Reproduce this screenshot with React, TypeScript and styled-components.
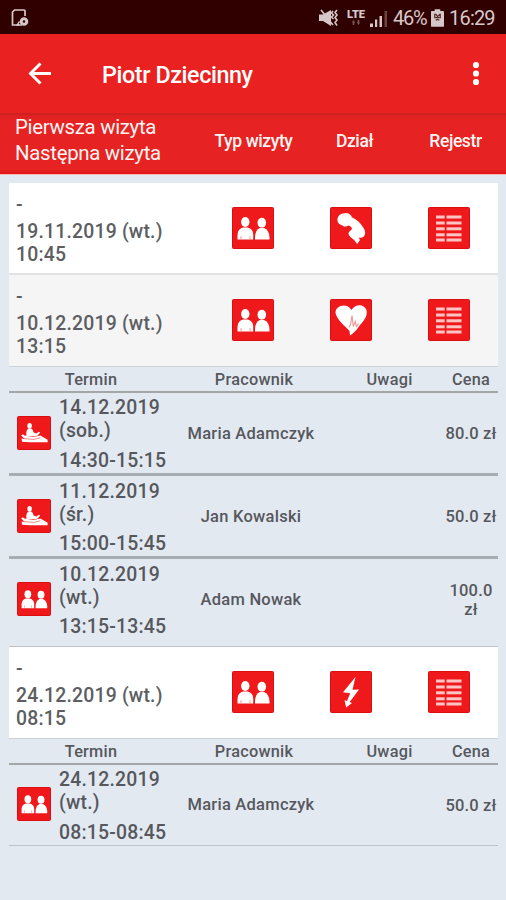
import React from "react";
import styled, { createGlobalStyle } from "styled-components";

const GlobalStyle = createGlobalStyle`
  * { box-sizing: border-box; }
  body { margin: 0; background: #e3e9f1; font-family: Roboto, "Noto Sans", sans-serif; }
`;

const Screen = styled.main`
  width: 506px;
  height: 900px;
  overflow: hidden;
  display: flex;
  flex-direction: column;
  background: #e3e9f1;
  color: #5c5e62;
  font-weight: 500;
`;

const StatusBar = styled.div`
  height: 34px;
  flex: none;
  display: flex;
  align-items: center;
  justify-content: space-between;
  padding: 2px 11px 0 10px;
  background: #300001;
  color: #d6c8c8;
`;

const StatusGroup = styled.div`
  display: flex;
  align-items: center;
`;

const StatusText = styled.span<{ $width: number; $spacing: number }>`
  width: ${(p) => p.$width}px;
  font-size: 20px;
  font-weight: 400;
  line-height: 22px;
  letter-spacing: ${(p) => p.$spacing}px;
  padding-left: 5px;
  white-space: nowrap;
`;

const Network = styled.span`
  display: flex;
  flex-direction: column;
  align-items: center;
  width: 20px;
  margin: 0 4px 1px 7px;
  font-size: 11px;
  font-weight: 900;
  line-height: 10px;
`;

const AppBar = styled.header`
  height: 79px;
  flex: none;
  display: flex;
  align-items: center;
  padding: 1px 20px 0 22px;
  background: #e92121;
  color: #fff;
`;

const Title = styled.h1`
  flex: 1;
  margin: 1px 0 0 44px;
  font-size: 23.3px;
  line-height: 28px;
  font-weight: 500;
  letter-spacing: -0.4px;
`;

const IconButton = styled.button`
  display: flex;
  padding: 0;
  border: 0;
  background: none;
  color: inherit;
`;

const ColumnBar = styled.div`
  height: 62px;
  flex: none;
  display: grid;
  grid-template-columns: 188px 101px 101px 101px;
  padding: 0 0 7px 15px;
  align-items: center;
  background: linear-gradient(#c81f1f 0, #df2222 3px, #e62222 8px, #e62222 57px, #e01515 61px);
  color: #fff4f2;
  border-bottom: 1px solid #f9b8b8;
`;

const ColumnTitle = styled.div`
  padding-top: 1px;
  font-size: 17.5px;
  letter-spacing: -0.4px;
  line-height: 22px;
  text-align: center;
  white-space: nowrap;
`;

const VisitTitle = styled.div`
  font-size: 20.4px;
  line-height: 26.5px;
  font-weight: 400;
  letter-spacing: -0.3px;
  padding-top: 0;
`;

const List = styled.section`
  margin: 8px 8px 0 9px;
`;

const Visit = styled.article<{ $tint?: boolean; $line: number }>`
  height: 92px;
  padding-bottom: ${(p) => 2 - p.$line}px;
  display: grid;
  grid-template-columns: 195px 98px 98px 98px;
  align-items: center;
  justify-items: center;
  background: ${(p) => (p.$tint ? "#f5f5f5" : "#fff")};
  border-bottom: ${(p) => p.$line}px solid ${(p) => (p.$line > 1 ? "#e1e2e3" : "#cdd2d6")};
`;

const DateText = styled.div`
  justify-self: start;
  padding: 3px 0 0 7px;
  font-size: 19.4px;
  line-height: 23px;
  letter-spacing: 0.2px;
  white-space: pre-line;
`;

const FirstVisit = styled.div`
  margin-bottom: 4px;
`;

const Tile = styled.div<{ $size: number }>`
  width: ${(p) => p.$size}px;
  height: ${(p) => p.$size}px;
  flex: none;
  border: 1.5px solid #dc0d10;
  border-radius: 1.5px;
  background: #ef191c;
  svg { display: block; width: 100%; height: 100%; }
`;

const Sessions = styled.div`
  color: #56585d;
`;

const SessionGrid = styled.div`
  display: grid;
  grid-template-columns: 164px 162px 109px 54px;
  align-items: center;
`;

const SessionHead = styled(SessionGrid)`
  height: 26px;
  border-bottom: 2px solid #a3a7aa;
  font-size: 16.3px;
  line-height: 20px;
  letter-spacing: 0.25px;
  text-align: center;
  padding-top: 2px;
`;

const SessionRow = styled(SessionGrid)<{ $last?: boolean; $height: number; $bottom: number }>`
  height: ${(p) => p.$height}px;
  padding-bottom: ${(p) => p.$bottom}px;
  border-bottom: ${(p) => (p.$last ? "1px solid #bfc3c7" : "3px solid #a8adb1")};
`;

const TermCell = styled.div`
  display: flex;
  align-items: center;
  gap: 8px;
  padding-left: 8px;
`;

const Term = styled.div`
  padding-top: 3px;
  font-size: 19.4px;
  line-height: 23px;
  letter-spacing: 0.2px;
  white-space: pre-line;
`;

const Hours = styled.div`
  margin-top: 6.5px;
  white-space: nowrap;
`;

const Worker = styled.div`
  padding: 1px 6px 0 0;
  text-align: center;
  font-size: 16.5px;
  letter-spacing: 0.25px;
`;

const Price = styled.div`
  padding-top: 2px;
  font-size: 16.5px;
  line-height: 19.5px;
  letter-spacing: 0.15px;
  text-align: center;
`;

type IconName = "people" | "baby" | "heart" | "bolt" | "list" | "massage";

const drawings: Record<IconName, React.ReactNode> = {
  people: (
    <g>
      <ellipse cx="12.3" cy="14" rx="4.2" ry="5" />
      <path d="M4.5 31.5V27Q4.5 21 10 19.500h4.800Q20 21 20.200 26v5.500z" />
      <ellipse cx="28.800" cy="14.800" rx="4.300" ry="5" />
      <path d="M22 31.500V29Q22.300 22 27 20h4Q36 22 36.500 29v2.500z" />
      <path d="M8 28v3M17 28v3" stroke="#f79b9c" strokeWidth="1" />
    </g>
  ),
  baby: (
    <path d="M6.500 13C6 8 9.500 5 14 5.200c3-.5 6 1.300 7 4.300 3.500 1.200 9 5.500 11.500 10.500 2 3 2.200 6 .7 8-1 1.500-3 2-5.500 1.700l1.300 2.300-2.800 4-3-4-3.200-2.500c-2-2-3.500-4-1.500-6l2.500-2.500c0-2-1.800-3-3.500-3.500-2.500 1.500-5 1-6.500-.3-2.700-.7-4.200-2.200-4.500-4.200z" />
  ),
  heart: (
    <g>
      <path d="M20.500 10C24 3.500 33 3.500 35.500 10c1.500 7-4 12-8 17-2.500 4-5 6-8.500 8.500l-.5-4.500C14 26 6 20 4.500 13 4.500 5 16 2.500 20.500 10z" />
      <path d="M18 27.500l1.500-3 1.500-9 1.300 11 1.900-5 1.300 5 2-3" fill="none" stroke="#f39495" strokeWidth="1.100" />
    </g>
  ),
  bolt: (
    <path d="M24.500 5L12 20.300l7.200 1-3.200 7.700-2.500-.8 1.700 7.300 5.800-4.500-2.300-.9L28 17.500l-6.500.3z" />
  ),
  list: (
    <g fill="#ffc5c5">
      {[8, 14, 19.800, 25.800, 31].map((y) => (
        <React.Fragment key={y}>
          <rect x="7" y={y - 0.500} width="8.700" height="3" />
          <rect x="17.500" y={y - 0.500} width="15" height="3" />
        </React.Fragment>
      ))}
    </g>
  ),
  massage: (
    <g>
      <ellipse cx="14.500" cy="11" rx="2.800" ry="3.600" />
      <path d="M10.500 24q-1-8 3-9.500h3q2.500 1 3 5l3.500 1 3-2 1.700 1-3 3.500-4 1z" />
      <path d="M4 23q2-2 4 0l11 2 9-2 9 5.500v3q-18 .5-32-.5l-.5-4 4 .5z" />
      <path d="M7 27l13 1 8-2" fill="none" stroke="#ef4547" strokeWidth=".8" />
    </g>
  ),
};

function Icon({ name, size = 42 }: { name: IconName; size?: number }) {
  return (
    <Tile $size={size}>
      <svg viewBox="0 0 40 40" fill="#fff">{drawings[name]}</svg>
    </Tile>
  );
}

interface SessionData {
  icon: IconName;
  date: string;
  hours: string;
  worker: string;
  price: string;
  height: number;
  bottom?: number;
}

interface VisitData {
  first: string;
  next: string;
  department: IconName;
  tint?: boolean;
  line: number;
  sessions: SessionData[];
}

const visits: VisitData[] = [
  { first: "-", next: "19.11.2019 (wt.)\n10:45", department: "baby", line: 2, sessions: [] },
  {
    first: "-",
    next: "10.12.2019 (wt.)\n13:15",
    department: "heart",
    tint: true,
    line: 1,
    sessions: [
      { icon: "massage", date: "14.12.2019\n(sob.)", hours: "14:30-15:15", worker: "Maria Adamczyk", price: "80.0 zł", height: 83, bottom: 1 },
      { icon: "massage", date: "11.12.2019\n(śr.)", hours: "15:00-15:45", worker: "Jan Kowalski", price: "50.0 zł", height: 83 },
      { icon: "people", date: "10.12.2019\n(wt.)", hours: "13:15-13:45", worker: "Adam Nowak", price: "100.0 zł", height: 88, bottom: 7 },
    ],
  },
  {
    first: "-",
    next: "24.12.2019 (wt.)\n08:15",
    department: "bolt",
    line: 1,
    sessions: [
      { icon: "people", date: "24.12.2019\n(wt.)", hours: "08:15-08:45", worker: "Maria Adamczyk", price: "50.0 zł", height: 81, bottom: 2 },
    ],
  },
];

export default function App() {
  return (
    <Screen>
      <GlobalStyle />
      <StatusBar>
        <svg width="19" height="20" viewBox="0 0 19 20" fill="none" stroke="currentColor" strokeWidth="1.700">
          <path d="M15 8V3q0-1-1-1H4.500L2.500 4v13h7" />
          <circle cx="14" cy="13.500" r="2.800" strokeWidth="3" />
          <path d="M9.500 13.500L7 17h5" strokeWidth="1.300" />
        </svg>
        <StatusGroup>
          <svg width="20" height="18" viewBox="0 0 20 18" fill="currentColor">
            <path d="M0 5.500h4L12 1v16L4 12H0z" />
            <path d="M2 1l12 15M14 2l-1.500 2 2 2-2 2 2 2M18 1l-2 2.500 2 2.500-2 2.500 2 2.500-2 2.500 2 3" fill="none" stroke="currentColor" strokeWidth="1.600" />
          </svg>
          <Network>
            LTE
            <svg width="10" height="5" viewBox="0 0 10 6" fill="#7c5556">
              <path d="M0 3l2-3 2 3H3v3H1V3zM6 3h1V0h2v3h1L8 6z" />
            </svg>
          </Network>
          <svg width="18" height="17" viewBox="0 0 18 17" fill="currentColor">
            <path d="M0 13.500h3V17H0zM5 9.500h2.200V17H5zM9.500 6H12v11H9.500z" />
            <path d="M14.500 1H17v16h-2.500z" fill="#694344" />
          </svg>
          <StatusText $width={43} $spacing={-1.2}>46%</StatusText>
          <svg width="13" height="18" viewBox="0 0 14 19" fill="currentColor">
            <path d="M4 0h6v2h3q1 0 1 1v15q0 1-1 1H1q-1 0-1-1V3q0-1 1-1h3z" />
            <path d="M4 5v4h6V5M5 5l2 3 3-3M5 12l2-1 2 1" fill="none" stroke="#5a2c2d" strokeWidth="1.300" />
          </svg>
          <StatusText $width={51} $spacing={-0.8}>16:29</StatusText>
        </StatusGroup>
      </StatusBar>

      <AppBar>
        <IconButton aria-label="Wstecz">
          <svg width="36" height="36" viewBox="0 0 36 36" fill="none" stroke="currentColor" strokeWidth="2.900">
            <path d="M29 17.500H8.500M18.500 7.500l-10 10 10 10" />
          </svg>
        </IconButton>
        <Title>Piotr Dziecinny</Title>
        <IconButton aria-label="Menu">
          <svg width="20" height="28" viewBox="0 0 20 28" fill="currentColor">
            <circle cx="10" cy="5" r="3.100" />
            <circle cx="10" cy="13.500" r="3.100" />
            <circle cx="10" cy="22" r="3.100" />
          </svg>
        </IconButton>
      </AppBar>

      <ColumnBar>
        <VisitTitle>Pierwsza wizyta<br />Następna wizyta</VisitTitle>
        <ColumnTitle>Typ wizyty</ColumnTitle>
        <ColumnTitle>Dział</ColumnTitle>
        <ColumnTitle>Rejestr</ColumnTitle>
      </ColumnBar>

      <List>
        {visits.map((visit) => (
          <React.Fragment key={visit.next}>
            <Visit $tint={visit.tint} $line={visit.line}>
              <DateText>
                <FirstVisit>{visit.first}</FirstVisit>
                {visit.next}
              </DateText>
              <Icon name="people" />
              <Icon name={visit.department} />
              <Icon name="list" />
            </Visit>
            {visit.sessions.length > 0 && (
              <Sessions>
                <SessionHead>
                  <span>Termin</span>
                  <span>Pracownik</span>
                  <span>Uwagi</span>
                  <span>Cena</span>
                </SessionHead>
                {visit.sessions.map((s, i) => (
                  <SessionRow
                    key={s.date}
                    $height={s.height}
                    $bottom={s.bottom ?? 0}
                    $last={i === visit.sessions.length - 1}
                  >
                    <TermCell>
                      <Icon name={s.icon} size={34} />
                      <Term>
                        {s.date}
                        <Hours>{s.hours}</Hours>
                      </Term>
                    </TermCell>
                    <Worker>{s.worker}</Worker>
                    <span />
                    <Price>{s.price}</Price>
                  </SessionRow>
                ))}
              </Sessions>
            )}
          </React.Fragment>
        ))}
      </List>
    </Screen>
  );
}
